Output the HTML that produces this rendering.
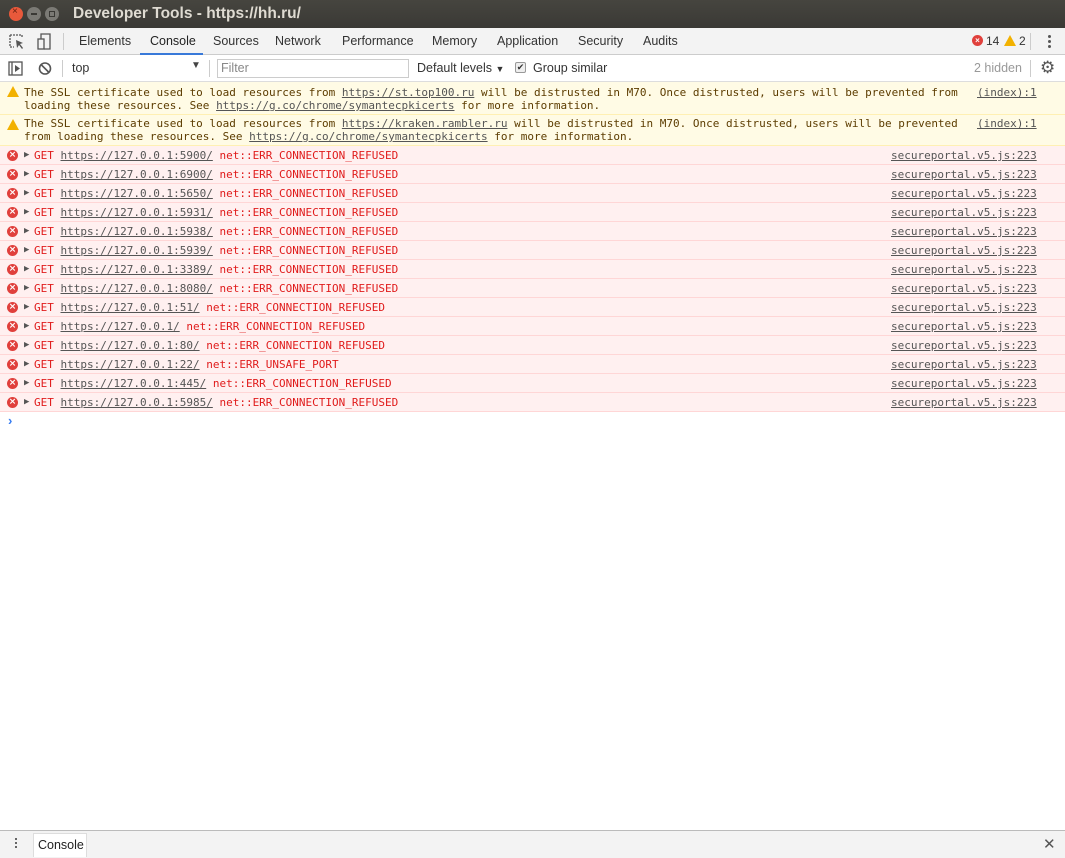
<!DOCTYPE html>
<html><head><meta charset="utf-8"><style>
*{margin:0;padding:0;box-sizing:border-box}
body{width:1065px;height:858px;position:relative;background:#fff;font-family:"Liberation Sans","DejaVu Sans",sans-serif;overflow:hidden}
.a{position:absolute;white-space:nowrap}
.title{left:0;top:0;width:1065px;height:28px;background:linear-gradient(#46453f,#3a3935);}
.tb{left:0;top:28px;width:1065px;height:27px;background:#f3f3f3;border-bottom:1px solid #ccc}
.tb2{left:0;top:55px;width:1065px;height:27px;background:#fff;border-bottom:1px solid #ddd}
.tab{top:34px;font-size:12.5px;color:#333}
.mono{font-family:"DejaVu Sans Mono","Liberation Mono",monospace;font-size:11px}
.warn{left:0;width:1065px;background:#fffbe5;border-bottom:1px solid #fff0b3;color:#5c3c00}
.err{left:0;width:1065px;height:19px;background:#fff0f0;border-bottom:1px solid #ffd6d6;color:#e01b1b}
.err span{position:absolute;top:3px}
u{color:#555}
.ei{position:absolute;left:7px;top:4px;width:11px;height:11px;border-radius:50%;background:#e0403c;color:#fff;font-size:9px;line-height:11px;text-align:center;font-family:"DejaVu Sans",sans-serif;font-weight:bold}
.wi{position:absolute;left:7px;top:4px;width:0;height:0;border-left:6px solid transparent;border-right:6px solid transparent;border-bottom:11px solid #f2b100}
</style></head><body>
<div class="a title"></div>
<div class="a" style="left:9px;top:7px;width:14px;height:14px;border-radius:50%;background:#e9593b"></div>
<div class="a" style="left:12px;top:6px;font-size:10px;color:#6b2010">×</div>
<div class="a" style="left:27px;top:7px;width:14px;height:14px;border-radius:50%;background:#7b7a75"></div>
<div class="a" style="left:31px;top:13px;width:6px;height:2px;background:#3a3935"></div>
<div class="a" style="left:45px;top:7px;width:14px;height:14px;border-radius:50%;background:#7b7a75"></div>
<div class="a" style="left:49px;top:11px;width:6px;height:6px;border:1px solid #3a3935"></div>
<div class="a" style="left:73px;top:5px;font-size:15.5px;font-weight:bold;color:#dfdbd2">Developer Tools - https://hh.ru/</div>

<div class="a tb"></div>
<svg class="a" style="left:8px;top:33px" width="48" height="18"><path d="M2 2h12v3M2 2v12h4" fill="none" stroke="#555" stroke-width="1.3" stroke-dasharray="2 1"/><path d="M8 7l7 3-3 1 3 4-1 1-3-4-2 3z" fill="#555"/><rect x="30" y="6" width="6" height="10" fill="none" stroke="#555" stroke-width="1.3"/><path d="M33 6V1h9v15h-6" fill="none" stroke="#555" stroke-width="1.3"/></svg>
<div class="a" style="left:63px;top:33px;width:1px;height:17px;background:#ccc"></div>
<div class="a tab" style="left:79px">Elements</div>
<div class="a tab" style="left:150px;color:#222">Console</div>
<div class="a" style="left:140px;top:53px;width:63px;height:2px;background:#3879d9"></div>
<div class="a tab" style="left:213px">Sources</div>
<div class="a tab" style="left:275px">Network</div>
<div class="a tab" style="left:342px">Performance</div>
<div class="a tab" style="left:432px">Memory</div>
<div class="a tab" style="left:497px">Application</div>
<div class="a tab" style="left:578px">Security</div>
<div class="a tab" style="left:643px">Audits</div>
<div class="a" style="left:972px;top:35px;width:11px;height:11px;border-radius:50%;background:#e0403c;color:#fff;font-size:8px;line-height:11px;text-align:center;font-weight:bold">×</div>
<div class="a" style="left:986px;top:34px;font-size:12px;color:#333">14</div>
<div class="a" style="left:1004px;top:35px;width:0;height:0;border-left:6px solid transparent;border-right:6px solid transparent;border-bottom:11px solid #f2b100"></div>
<div class="a" style="left:1019px;top:34px;font-size:12px;color:#333">2</div>
<div class="a" style="left:1030px;top:33px;width:1px;height:17px;background:#ccc"></div>
<div class="a" style="left:1048px;top:35px;width:3px;height:3px;border-radius:50%;background:#555;box-shadow:0 5px 0 #555,0 10px 0 #555"></div>

<div class="a tb2"></div>
<svg class="a" style="left:8px;top:61px" width="44" height="16"><rect x="1" y="1" width="13" height="13" fill="none" stroke="#555" stroke-width="1.3"/><path d="M4 1v13" stroke="#555" stroke-width="1.3"/><path d="M7 4l5 3.5-5 3.5z" fill="#555"/><circle cx="37" cy="7.5" r="5.5" fill="none" stroke="#555" stroke-width="1.6"/><path d="M33 3.5l8 8" stroke="#555" stroke-width="1.6"/></svg>
<div class="a" style="left:62px;top:60px;width:1px;height:17px;background:#ccc"></div>
<div class="a" style="left:72px;top:61px;font-size:12.5px;color:#333">top</div>
<div class="a" style="left:191px;top:60px;font-size:10px;color:#444">▼</div>
<div class="a" style="left:209px;top:60px;width:1px;height:17px;background:#ccc"></div>
<div class="a" style="left:217px;top:59px;width:192px;height:19px;border:1px solid #ccc"></div>
<div class="a" style="left:221px;top:61px;font-size:12.5px;color:#888">Filter</div>
<div class="a" style="left:417px;top:61px;font-size:12.5px;color:#333">Default levels <span style="font-size:9px">▼</span></div>
<div class="a" style="left:515px;top:62px;width:11px;height:11px;border:1px solid #999;border-radius:2px;background:#eee;font-size:9px;line-height:9px;text-align:center;color:#333">✔</div>
<div class="a" style="left:533px;top:61px;font-size:12.5px;color:#333">Group similar</div>
<div class="a" style="left:974px;top:61px;font-size:12.5px;color:#999">2 hidden</div>
<div class="a" style="left:1030px;top:60px;width:1px;height:17px;background:#ccc"></div>
<div class="a" style="left:1040px;top:58px;font-size:17px;color:#555">⚙</div>

<div class="a warn mono" style="top:82px;height:33px"><i class="wi"></i><div class="a" style="left:24px;top:4px;line-height:13px">The SSL certificate used to load resources from <u>https://st.top100.ru</u> will be distrusted in M70. Once distrusted, users will be prevented from<br>loading these resources. See <u>https://g.co/chrome/symantecpkicerts</u> for more information.</div><div class="a" style="left:977px;top:4px"><u>(index):1</u></div></div>
<div class="a warn mono" style="top:115px;height:31px"><i class="wi"></i><div class="a" style="left:24px;top:2px;line-height:13px">The SSL certificate used to load resources from <u>https://kraken.rambler.ru</u> will be distrusted in M70. Once distrusted, users will be prevented<br>from loading these resources. See <u>https://g.co/chrome/symantecpkicerts</u> for more information.</div><div class="a" style="left:977px;top:2px"><u>(index):1</u></div></div>

<div class="a mono" style="left:0;top:146px;width:1065px">
<div class="err a" style="top:0"><i class="ei">×</i><span style="left:24px;color:#555;font-size:9px;top:4px">▶</span><span style="left:34px">GET <u>https://127.0.0.1:5900/</u> net::ERR_CONNECTION_REFUSED</span><span style="left:891px"><u>secureportal.v5.js:223</u></span></div>
<div class="err a" style="top:19px"><i class="ei">×</i><span style="left:24px;color:#555;font-size:9px;top:4px">▶</span><span style="left:34px">GET <u>https://127.0.0.1:6900/</u> net::ERR_CONNECTION_REFUSED</span><span style="left:891px"><u>secureportal.v5.js:223</u></span></div>
<div class="err a" style="top:38px"><i class="ei">×</i><span style="left:24px;color:#555;font-size:9px;top:4px">▶</span><span style="left:34px">GET <u>https://127.0.0.1:5650/</u> net::ERR_CONNECTION_REFUSED</span><span style="left:891px"><u>secureportal.v5.js:223</u></span></div>
<div class="err a" style="top:57px"><i class="ei">×</i><span style="left:24px;color:#555;font-size:9px;top:4px">▶</span><span style="left:34px">GET <u>https://127.0.0.1:5931/</u> net::ERR_CONNECTION_REFUSED</span><span style="left:891px"><u>secureportal.v5.js:223</u></span></div>
<div class="err a" style="top:76px"><i class="ei">×</i><span style="left:24px;color:#555;font-size:9px;top:4px">▶</span><span style="left:34px">GET <u>https://127.0.0.1:5938/</u> net::ERR_CONNECTION_REFUSED</span><span style="left:891px"><u>secureportal.v5.js:223</u></span></div>
<div class="err a" style="top:95px"><i class="ei">×</i><span style="left:24px;color:#555;font-size:9px;top:4px">▶</span><span style="left:34px">GET <u>https://127.0.0.1:5939/</u> net::ERR_CONNECTION_REFUSED</span><span style="left:891px"><u>secureportal.v5.js:223</u></span></div>
<div class="err a" style="top:114px"><i class="ei">×</i><span style="left:24px;color:#555;font-size:9px;top:4px">▶</span><span style="left:34px">GET <u>https://127.0.0.1:3389/</u> net::ERR_CONNECTION_REFUSED</span><span style="left:891px"><u>secureportal.v5.js:223</u></span></div>
<div class="err a" style="top:133px"><i class="ei">×</i><span style="left:24px;color:#555;font-size:9px;top:4px">▶</span><span style="left:34px">GET <u>https://127.0.0.1:8080/</u> net::ERR_CONNECTION_REFUSED</span><span style="left:891px"><u>secureportal.v5.js:223</u></span></div>
<div class="err a" style="top:152px"><i class="ei">×</i><span style="left:24px;color:#555;font-size:9px;top:4px">▶</span><span style="left:34px">GET <u>https://127.0.0.1:51/</u> net::ERR_CONNECTION_REFUSED</span><span style="left:891px"><u>secureportal.v5.js:223</u></span></div>
<div class="err a" style="top:171px"><i class="ei">×</i><span style="left:24px;color:#555;font-size:9px;top:4px">▶</span><span style="left:34px">GET <u>https://127.0.0.1/</u> net::ERR_CONNECTION_REFUSED</span><span style="left:891px"><u>secureportal.v5.js:223</u></span></div>
<div class="err a" style="top:190px"><i class="ei">×</i><span style="left:24px;color:#555;font-size:9px;top:4px">▶</span><span style="left:34px">GET <u>https://127.0.0.1:80/</u> net::ERR_CONNECTION_REFUSED</span><span style="left:891px"><u>secureportal.v5.js:223</u></span></div>
<div class="err a" style="top:209px"><i class="ei">×</i><span style="left:24px;color:#555;font-size:9px;top:4px">▶</span><span style="left:34px">GET <u>https://127.0.0.1:22/</u> net::ERR_UNSAFE_PORT</span><span style="left:891px"><u>secureportal.v5.js:223</u></span></div>
<div class="err a" style="top:228px"><i class="ei">×</i><span style="left:24px;color:#555;font-size:9px;top:4px">▶</span><span style="left:34px">GET <u>https://127.0.0.1:445/</u> net::ERR_CONNECTION_REFUSED</span><span style="left:891px"><u>secureportal.v5.js:223</u></span></div>
<div class="err a" style="top:247px"><i class="ei">×</i><span style="left:24px;color:#555;font-size:9px;top:4px">▶</span><span style="left:34px">GET <u>https://127.0.0.1:5985/</u> net::ERR_CONNECTION_REFUSED</span><span style="left:891px"><u>secureportal.v5.js:223</u></span></div>
</div>
<div class="a" style="left:8px;top:413px;font-size:13px;color:#367cf1;font-weight:bold">›</div>

<div class="a" style="left:0;top:830px;width:1065px;height:28px;background:#f3f3f3;border-top:1px solid #bbb"></div>
<div class="a" style="left:15px;top:838px;width:2px;height:2px;background:#666;box-shadow:0 4px 0 #666,0 8px 0 #666"></div>
<div class="a" style="left:33px;top:833px;width:54px;height:24px;background:#fff;border:1px solid #ddd;border-bottom:none"></div>
<div class="a" style="left:38px;top:838px;font-size:12.5px;color:#222">Console</div>
<div class="a" style="left:1043px;top:835px;font-size:15px;color:#555">✕</div>
</body></html>
